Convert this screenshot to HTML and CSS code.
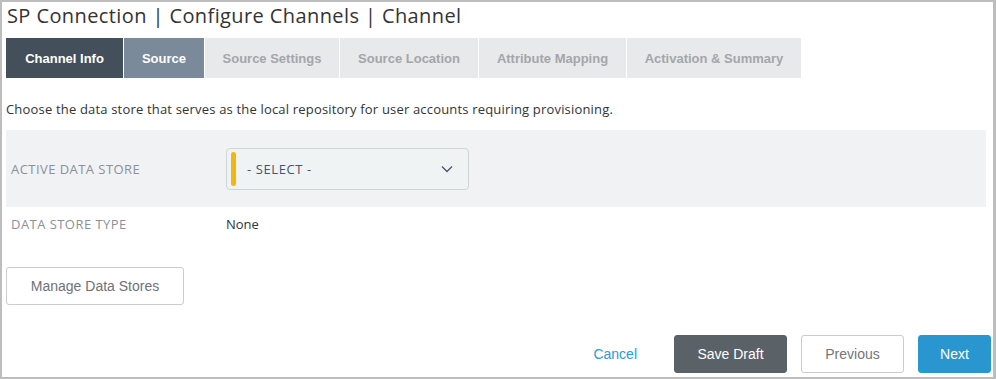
FILE: index.html
```html
<!DOCTYPE html>
<html>
<head>
<meta charset="utf-8">
<link rel="stylesheet" href="styles.css">
</head>
<body>
<div class="frame">
  <h1 class="title">SP Connection | Configure Channels | Channel</h1>
  <div class="tabs">
    <div class="tab tab-done">Channel Info</div>
    <div class="tab tab-current">Source</div>
    <div class="tab tab-todo tab-w1">Source Settings</div>
    <div class="tab tab-todo tab-w2">Source Location</div>
    <div class="tab tab-todo tab-w3">Attribute Mapping</div>
    <div class="tab tab-todo tab-w4">Activation &amp; Summary</div>
  </div>
  <p class="desc">Choose the data store that serves as the local repository for user accounts requiring provisioning.</p>
  <div class="row row-shaded">
    <div class="label">ACTIVE DATA STORE</div>
    <div class="select">
      <span class="required-bar"></span>
      <span class="select-text">- SELECT -</span>
      <svg class="chevron" width="12" height="8" viewBox="0 0 12 8"><path d="M1 1.5 L6 6.5 L11 1.5" fill="none" stroke="#4a5a70" stroke-width="1.4"/></svg>
    </div>
  </div>
  <div class="row row-plain">
    <div class="label">DATA STORE TYPE</div>
    <div class="value">None</div>
  </div>
  <button class="btn-manage">Manage Data Stores</button>
  <div class="footer">
    <a class="cancel">Cancel</a>
    <button class="btn btn-save">Save Draft</button>
    <button class="btn btn-prev">Previous</button>
    <button class="btn btn-next">Next</button>
  </div>
</div>
</body>
</html>
```
FILE: styles.css
```css
html, body {
  margin: 0;
  padding: 0;
  background: #ffffff;
}
.frame {
  box-sizing: border-box;
  width: 996px;
  height: 379px;
  border-style: solid;
  border-color: #bdbdbd;
  border-width: 2px 3px 2px 2px;
  padding: 0 7px 0 4px;
  font-family: "Open Sans", "Liberation Sans", sans-serif;
  color: #333;
  display: flex;
  flex-direction: column;
}
.title {
  margin: 2px 0 0 1px;
  font-size: 20px;
  font-weight: 400;
  line-height: 24px;
  height: 24px;
  color: #333;
  letter-spacing: 0.4px;
}
.tabs {
  display: flex;
  margin-top: 10px;
  height: 40px;
  gap: 1px;
}
.tab {
  box-sizing: border-box;
  height: 40px;
  display: flex;
  align-items: center;
  justify-content: center;
  font-family: "Liberation Sans", Arial, sans-serif;
  font-weight: 700;
  font-size: 13px;
  letter-spacing: 0;
}
.tab-done {
  width: 117px;
  background: #434f5a;
  color: #ffffff;
}
.tab-current {
  width: 80px;
  background: #7b8a9b;
  color: #ffffff;
}
.tab-todo {
  background: #e8e9ea;
  color: #a3a6a9;
}
.tab-w1 { width: 134px; }
.tab-w2 { width: 138px; }
.tab-w3 { width: 147px; }
.tab-w4 { width: 174px; }
.desc {
  margin: 22px 0 0 0;
  font-size: 13px;
  line-height: 18px;
  color: #333;
  letter-spacing: 0.18px;
}
.row {
  display: flex;
  align-items: center;
}
.row-shaded {
  margin-top: 12px;
  height: 77px;
  background: #f1f2f4;
}
.row-plain {
  height: 34px;
}
.label {
  box-sizing: border-box;
  width: 220px;
  padding-left: 5px;
  font-size: 13px;
  color: #8c9096;
  letter-spacing: 0.45px;
}
.select {
  box-sizing: border-box;
  width: 243px;
  height: 42px;
  margin-top: 1px;
  border: 1px solid #cfd4d8;
  border-radius: 4px;
  background: #eff3f4;
  display: flex;
  align-items: center;
  padding: 0 15px 0 4px;
}
.required-bar {
  width: 5px;
  height: 34px;
  border-radius: 3px;
  background: #f2b611;
}
.select-text {
  flex: 1;
  margin-left: 11px;
  font-size: 13px;
  color: #43546b;
  letter-spacing: 0.6px;
}
.chevron {
  display: block;
}
.value {
  font-size: 13px;
  color: #333;
}
.btn-manage {
  box-sizing: border-box;
  align-self: flex-start;
  margin-top: 26px;
  width: 178px;
  height: 38px;
  border: 1px solid #cccccc;
  border-radius: 3px;
  background: #ffffff;
  font-family: "Liberation Sans", Arial, sans-serif;
  font-size: 14px;
  color: #6f7275;
}
.footer {
  margin-top: auto;
  margin-bottom: 4px;
  margin-right: -5px;
  display: flex;
  justify-content: flex-end;
  align-items: center;
}
.cancel {
  font-family: "Liberation Sans", Arial, sans-serif;
  font-size: 14px;
  color: #2b9ad5;
  margin-right: 37px;
}
.btn {
  box-sizing: border-box;
  height: 38px;
  border-radius: 3px;
  font-family: "Liberation Sans", Arial, sans-serif;
  font-size: 14px;
  border: 1px solid transparent;
}
.btn-save {
  width: 113px;
  background: #5a6268;
  color: #ffffff;
  border-color: #5a6268;
}
.btn-prev {
  width: 103px;
  margin-left: 14px;
  background: #ffffff;
  border-color: #cccccc;
  color: #737679;
}
.btn-next {
  width: 73px;
  margin-left: 14px;
  background: #2a96d0;
  border-color: #2a96d0;
  color: #ffffff;
}
```
